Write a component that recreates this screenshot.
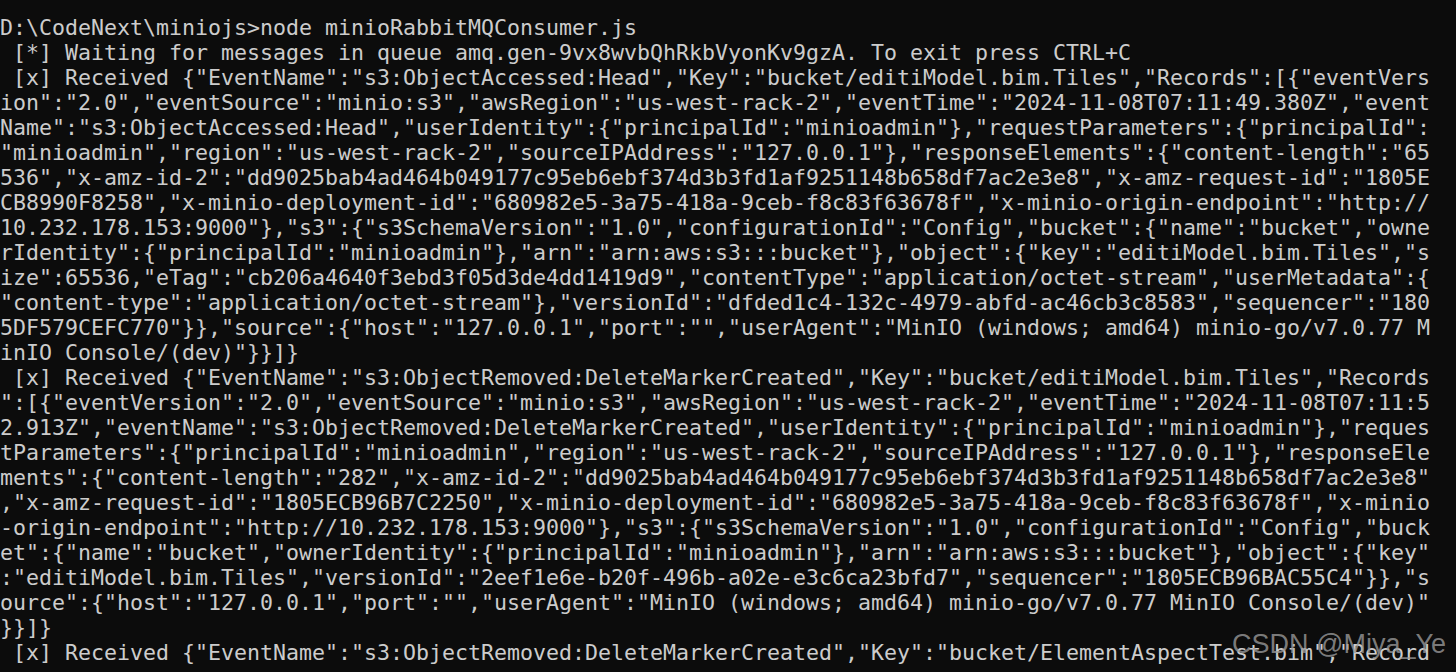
import React from 'react';

const lines: string[] = [
  'D:\\CodeNext\\miniojs>node minioRabbitMQConsumer.js',
  ' [*] Waiting for messages in queue amq.gen-9vx8wvbQhRkbVyonKv9gzA. To exit press CTRL+C',
  ' [x] Received {"EventName":"s3:ObjectAccessed:Head","Key":"bucket/editiModel.bim.Tiles","Records":[{"eventVers',
  'ion":"2.0","eventSource":"minio:s3","awsRegion":"us-west-rack-2","eventTime":"2024-11-08T07:11:49.380Z","event',
  'Name":"s3:ObjectAccessed:Head","userIdentity":{"principalId":"minioadmin"},"requestParameters":{"principalId":',
  '"minioadmin","region":"us-west-rack-2","sourceIPAddress":"127.0.0.1"},"responseElements":{"content-length":"65',
  '536","x-amz-id-2":"dd9025bab4ad464b049177c95eb6ebf374d3b3fd1af9251148b658df7ac2e3e8","x-amz-request-id":"1805E',
  'CB8990F8258","x-minio-deployment-id":"680982e5-3a75-418a-9ceb-f8c83f63678f","x-minio-origin-endpoint":"http://',
  '10.232.178.153:9000"},"s3":{"s3SchemaVersion":"1.0","configurationId":"Config","bucket":{"name":"bucket","owne',
  'rIdentity":{"principalId":"minioadmin"},"arn":"arn:aws:s3:::bucket"},"object":{"key":"editiModel.bim.Tiles","s',
  'ize":65536,"eTag":"cb206a4640f3ebd3f05d3de4dd1419d9","contentType":"application/octet-stream","userMetadata":{',
  '"content-type":"application/octet-stream"},"versionId":"dfded1c4-132c-4979-abfd-ac46cb3c8583","sequencer":"180',
  '5DF579CEFC770"}},"source":{"host":"127.0.0.1","port":"","userAgent":"MinIO (windows; amd64) minio-go/v7.0.77 M',
  'inIO Console/(dev)"}}]}',
  ' [x] Received {"EventName":"s3:ObjectRemoved:DeleteMarkerCreated","Key":"bucket/editiModel.bim.Tiles","Records',
  '":[{"eventVersion":"2.0","eventSource":"minio:s3","awsRegion":"us-west-rack-2","eventTime":"2024-11-08T07:11:5',
  '2.913Z","eventName":"s3:ObjectRemoved:DeleteMarkerCreated","userIdentity":{"principalId":"minioadmin"},"reques',
  'tParameters":{"principalId":"minioadmin","region":"us-west-rack-2","sourceIPAddress":"127.0.0.1"},"responseEle',
  'ments":{"content-length":"282","x-amz-id-2":"dd9025bab4ad464b049177c95eb6ebf374d3b3fd1af9251148b658df7ac2e3e8"',
  ',"x-amz-request-id":"1805ECB96B7C2250","x-minio-deployment-id":"680982e5-3a75-418a-9ceb-f8c83f63678f","x-minio',
  '-origin-endpoint":"http://10.232.178.153:9000"},"s3":{"s3SchemaVersion":"1.0","configurationId":"Config","buck',
  'et":{"name":"bucket","ownerIdentity":{"principalId":"minioadmin"},"arn":"arn:aws:s3:::bucket"},"object":{"key"',
  ':"editiModel.bim.Tiles","versionId":"2eef1e6e-b20f-496b-a02e-e3c6ca23bfd7","sequencer":"1805ECB96BAC55C4"}},"s',
  'ource":{"host":"127.0.0.1","port":"","userAgent":"MinIO (windows; amd64) minio-go/v7.0.77 MinIO Console/(dev)"',
  '}}]}',
  ' [x] Received {"EventName":"s3:ObjectRemoved:DeleteMarkerCreated","Key":"bucket/ElementAspectTest.bim","Record',
];

export default function App() {
  return (
    <div className="relative h-[672px] w-[1456px] overflow-hidden bg-[#0c0c0c] pt-[15px] text-[#cccccc]">
      <div className="font-['DejaVu_Sans_Mono',monospace] text-[21.6px]">
        {lines.map((line, i) => (
          <div key={i} className="h-[25px] whitespace-pre leading-[25px]">
            {line}
          </div>
        ))}
      </div>

      {/* watermark */}
      <div className="absolute right-[10px] bottom-[14px] font-['Liberation_Sans',sans-serif] text-[27px] leading-none text-[#9a9a9a]/80">
        CSDN @Miya_Ye
      </div>
    </div>
  );
}
